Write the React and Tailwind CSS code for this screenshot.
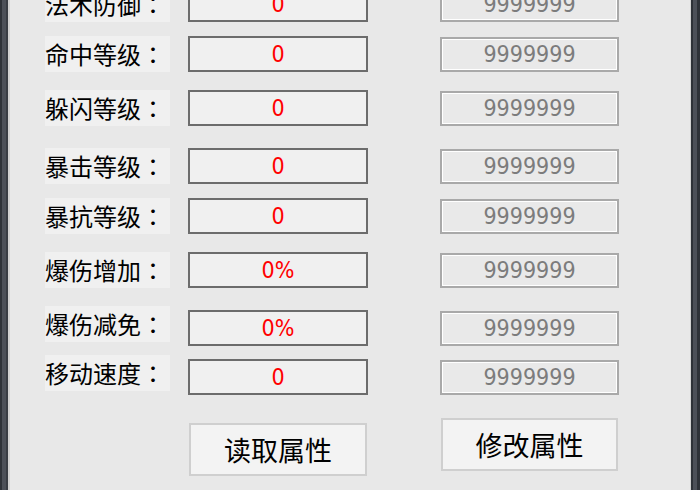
const rows = [
  { label: "法术防御", value: "0", mt: "-mt-[14px]" },
  { label: "命中等级", value: "0", mt: "mt-[14px]" },
  { label: "躲闪等级", value: "0", mt: "mt-[18px]" },
  { label: "暴击等级", value: "0", mt: "mt-[22px]" },
  { label: "暴抗等级", value: "0", mt: "mt-[14px]" },
  { label: "爆伤增加", value: "0%", mt: "mt-[18px]" },
  { label: "爆伤减免", value: "0%", mt: "mt-[22px]", shift: "-translate-y-[4px]" },
  { label: "移动速度", value: "0", mt: "mt-[13px]", shift: "-translate-y-[4px]" },
];

const cjk = { fontFamily: '"Noto Sans CJK SC", "Noto Sans", sans-serif' };
// TC puts the full-width colon in the middle of its cell
const colon = { fontFamily: '"Noto Sans CJK TC", "Noto Sans CJK SC", sans-serif' };
const digits = {
  fontFamily: '"DejaVu Sans Condensed", "Liberation Sans Narrow", "DejaVu Sans", sans-serif',
};

const AttrRow = ({ label, value, mt, shift }) => {
  return (
    <div className={"flex items-start h-[36px] " + mt}>
      <div
        className={"w-[125px] h-[36px] bg-[#f0f0f0] flex items-center text-[24px] leading-none text-black whitespace-nowrap " + (shift || "")}
        style={cjk}
      >
        {label}
        <span style={colon}>：</span>
      </div>
      <div
        className="ml-[18px] w-[180px] h-[36px] border-2 border-[#6c6c6c] bg-[#f0f0f0] flex items-center justify-center text-[23px] leading-none text-[#ff0000]"
        style={digits}
      >
        {value}
      </div>
      <div className="ml-[72px] mt-[1px] w-[179px] h-[35px] border-2 border-[#a9a9a9] flex">
        <div
          className="flex-1 border border-white bg-[#e9e9e9] flex items-center justify-center text-[23px] leading-none text-[#7c7c7c]"
          style={digits}
        >
          9999999
        </div>
      </div>
    </div>
  );
};

const App = () => {
  return (
    <div className="w-[700px] h-[490px] flex overflow-hidden bg-[#e8e8e8]">
      <div className="flex shrink-0">
        <div className="w-[2px] bg-[#2e3238]"></div>
        <div className="w-[4px] bg-[#4c5058]"></div>
        <div className="w-[2px] bg-[#393d44]"></div>
        <div className="w-[2px] bg-[#d2d2d2]"></div>
      </div>

      <div className="flex-1 flex flex-col pl-[35px]">
        {rows.map((row, index) => (
          <AttrRow key={index} {...row} />
        ))}

        <div className="flex items-start mt-[23px]">
          <button
            className="ml-[144px] mt-[5px] w-[178px] h-[53px] border-2 border-[#cfcfcf] bg-[#f3f3f3] text-[27px] leading-none text-black flex items-center justify-center"
            style={cjk}
          >
            读取属性
          </button>
          <button
            className="ml-[74px] w-[177px] h-[53px] border-2 border-[#cfcfcf] bg-[#f3f3f3] text-[27px] leading-none text-black flex items-center justify-center"
            style={cjk}
          >
            修改属性
          </button>
        </div>
      </div>

      <div className="flex shrink-0">
        <div className="w-[1px] bg-[#d2d2d2]"></div>
        <div className="w-[2px] bg-[#2e3238]"></div>
        <div className="w-[4px] bg-[#4c5058]"></div>
        <div className="w-[3px] bg-[#2e3238]"></div>
      </div>
    </div>
  );
};

export default App;
